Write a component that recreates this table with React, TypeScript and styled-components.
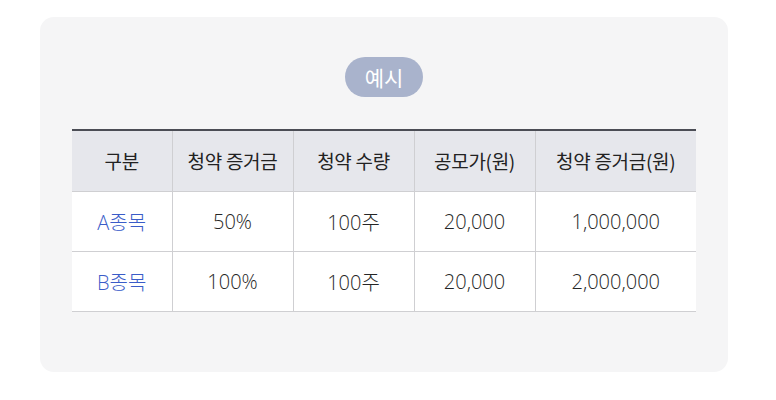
import React from "react";
import styled, { createGlobalStyle } from "styled-components";

const Global = createGlobalStyle`
  html, body { margin: 0; padding: 0; background: #ffffff; }
  body { font-family: "Noto Sans CJK KR", "Noto Sans", sans-serif; }
`;

const Page = styled.div`
  padding: 17px 48px 28px 40px;
`;

const Card = styled.section`
  width: 688px;
  box-sizing: border-box;
  background: #f5f5f6;
  border-radius: 14px;
  padding: 40px 32px 60px;
  display: flex;
  flex-direction: column;
  align-items: center;
`;

const Badge = styled.div`
  width: 78px;
  height: 40px;
  border-radius: 20px;
  background: #a9b3cc;
  color: #ffffff;
  font-size: 21px;
  font-weight: 400;
  display: flex;
  align-items: center;
  justify-content: center;
  margin-bottom: 32px;
`;

const Table = styled.table`
  width: 624px;
  border-collapse: collapse;
  table-layout: fixed;
  border-top: 2px solid #4b4d55;
  background: #ffffff;
`;

const HeadCell = styled.th<{ $w: number }>`
  width: ${(p) => p.$w}px;
  height: 61px;
  box-sizing: border-box;
  padding: 0;
  background: #e6e7ec;
  color: #222222;
  font-size: 19px;
  font-weight: 400;
  letter-spacing: -0.3px;
  text-align: center;
  border-bottom: 1px solid #cfcfd2;
  border-left: 1px solid #cfcfd2;
  &:first-child { border-left: none; }
`;

const Cell = styled.td<{ $accent?: boolean }>`
  height: 60px;
  box-sizing: border-box;
  padding: 0;
  text-align: center;
  font-family: "Open Sans", "Noto Sans CJK KR", sans-serif;
  font-size: 20px;
  font-weight: 300;
  color: ${(p) => (p.$accent ? "#3a5cc8" : "#262626")};
  border-bottom: 1px solid #cfcfd2;
  border-left: 1px solid #cfcfd2;
  &:first-child { border-left: none; }
`;

const cols = [
  { label: "구분", w: 100 },
  { label: "청약 증거금", w: 121 },
  { label: "청약 수량", w: 121 },
  { label: "공모가(원)", w: 121 },
  { label: "청약 증거금(원)", w: 161 },
];

const rows = [
  ["A종목", "50%", "100주", "20,000", "1,000,000"],
  ["B종목", "100%", "100주", "20,000", "2,000,000"],
];

export default function App() {
  return (
    <>
      <Global />
      <Page>
        <Card>
          <Badge>예시</Badge>
          <Table>
            <thead>
              <tr>
                {cols.map((c) => (
                  <HeadCell key={c.label} $w={c.w}>
                    {c.label}
                  </HeadCell>
                ))}
              </tr>
            </thead>
            <tbody>
              {rows.map((r) => (
                <tr key={r[0]}>
                  {r.map((v, i) => (
                    <Cell key={i} $accent={i === 0}>
                      {v}
                    </Cell>
                  ))}
                </tr>
              ))}
            </tbody>
          </Table>
        </Card>
      </Page>
    </>
  );
}
